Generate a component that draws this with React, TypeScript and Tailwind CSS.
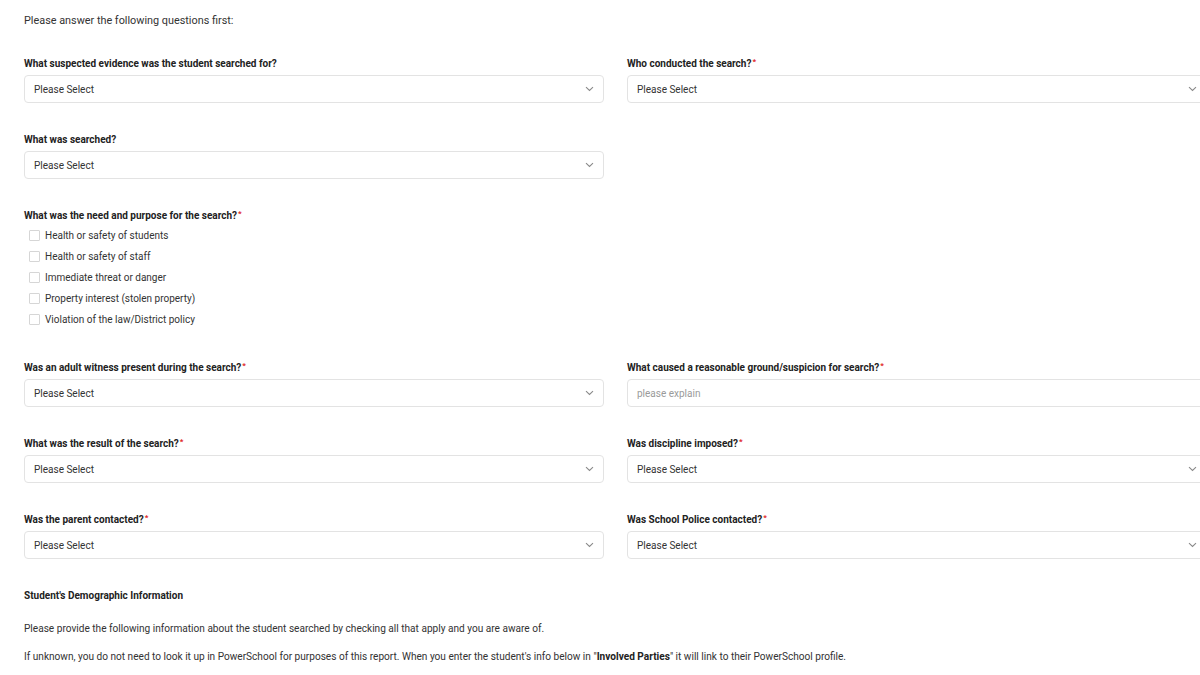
import React from "react";

const Req = () => <sup className="text-[#e02424] text-[8px] ml-[1px] relative top-[-3px]">*</sup>;

function Chevron() {
  return (
    <svg width="9" height="6" viewBox="0 0 9 6" className="shrink-0">
      <path d="M1 1.2 L4.5 4.5 L8 1.2" fill="none" stroke="#8a8a8a" strokeWidth="1.1" />
    </svg>
  );
}

function Select({ placeholder = "Please Select" }: { placeholder?: string }) {
  return (
    <div className="h-[28px] w-full border border-[#e3e3e3] rounded-[4px] bg-white flex items-center justify-between pl-[9px] pr-[9px] text-[10px] text-[#333]">
      <span>{placeholder}</span>
      <Chevron />
    </div>
  );
}

function TextInput({ placeholder }: { placeholder: string }) {
  return (
    <div className="h-[28px] w-full border border-[#e3e3e3] rounded-[4px] bg-white flex items-center pl-[9px] text-[10px] text-[#9a9a9a]">
      {placeholder}
    </div>
  );
}

function Label({ children, req }: { children: React.ReactNode; req?: boolean }) {
  return (
    <div className="text-[10px] font-bold text-[#222] leading-[12px] h-[12px]">
      {children}
      {req && <Req />}
    </div>
  );
}

function Field({ label, req, children }: { label: string; req?: boolean; children: React.ReactNode }) {
  return (
    <div className="flex flex-col gap-[5px]">
      <Label req={req}>{label}</Label>
      {children}
    </div>
  );
}

const checks = [
  "Health or safety of students",
  "Health or safety of staff",
  "Immediate threat or danger",
  "Property interest (stolen property)",
  "Violation of the law/District policy",
];

export default function App() {
  return (
    <div
      className="w-[1200px] h-[675px] overflow-hidden bg-white text-[#333]"
      style={{ fontFamily: "Roboto, 'Noto Sans', sans-serif" }}
    >
      <div className="pl-[24px] w-[1240px]">
        <div className="pt-[14px] text-[10.85px] text-[#333] leading-[13px]">Please answer the following questions first:</div>

        <div className="grid grid-cols-[580px_580px] gap-x-[23px] mt-[31px]">
          <Field label="What suspected evidence was the student searched for?">
            <Select />
          </Field>
          <Field label="Who conducted the search?" req>
            <Select />
          </Field>
        </div>

        <div className="grid grid-cols-[580px_580px] gap-x-[23px] mt-[31px]">
          <Field label="What was searched?">
            <Select />
          </Field>
        </div>

        <div className="mt-[31px] w-[580px]">
          <Label req>What was the need and purpose for the search?</Label>
          <div className="flex flex-col mt-[3px] pl-[5px]">
            {checks.map((c) => (
              <label key={c} className="flex items-center h-[21px] text-[10px] text-[#333]">
                <span className="w-[11px] h-[11px] border border-[#d6d6d6] rounded-[1px] bg-white mr-[5px]" />
                {c}
              </label>
            ))}
          </div>
        </div>

        <div className="grid grid-cols-[580px_580px] gap-x-[23px] mt-[32px]">
          <Field label="Was an adult witness present during the search?" req>
            <Select />
          </Field>
          <Field label="What caused a reasonable ground/suspicion for search?" req>
            <TextInput placeholder="please explain" />
          </Field>
        </div>

        <div className="grid grid-cols-[580px_580px] gap-x-[23px] mt-[31px]">
          <Field label="What was the result of the search?" req>
            <Select />
          </Field>
          <Field label="Was discipline imposed?" req>
            <Select />
          </Field>
        </div>

        <div className="grid grid-cols-[580px_580px] gap-x-[23px] mt-[31px]">
          <Field label="Was the parent contacted?" req>
            <Select />
          </Field>
          <Field label="Was School Police contacted?" req>
            <Select />
          </Field>
        </div>

        <div className="mt-[31px] text-[10px] font-bold text-[#222] leading-[12px]">Student's Demographic Information</div>
        <div className="mt-[21px] text-[10.1px] text-[#333] leading-[12px]">
          Please provide the following information about the student searched by checking all that apply and you are aware of.
        </div>
        <div className="mt-[16px] text-[10.1px] text-[#333] leading-[12px]">
          If unknown, you do not need to look it up in PowerSchool for purposes of this report. When you enter the student's info below in "<b className="text-[#222]">Involved Parties</b>" it will link to their PowerSchool profile.
        </div>
      </div>
    </div>
  );
}
